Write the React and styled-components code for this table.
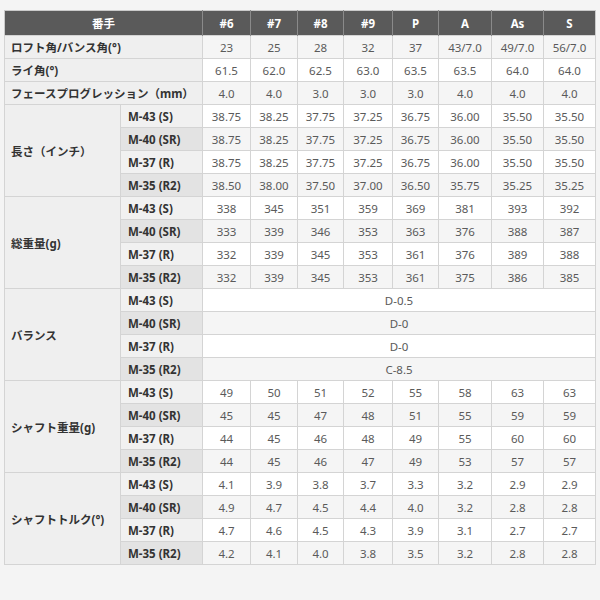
import React from "react";
import styled, { createGlobalStyle } from "styled-components";

const Global = createGlobalStyle`
  html, body { margin: 0; padding: 0; background: #f4f4f4; }
  body { font-family: "Noto Sans", "Noto Sans CJK JP", sans-serif; }
`;

const Page = styled.div`
  padding: 10px 5px 0 4px;
`;

const Table = styled.table`
  border-collapse: collapse;
  table-layout: fixed;
  width: 591px;
  font-size: 11.5px;
  border: 1px solid #cacaca;
`;

const Th = styled.th`
  height: 24px;
  padding: 0;
  background: #5a5a5a;
  color: #fff;
  font-weight: bold;
  text-align: center;
  border-left: 1px solid #8a8a8a;
  &:first-child { border-left: none; }
`;

const Tr = styled.tr`
  height: 23px;
`;

const Label = styled.td`
  padding: 0 0 0 6px;
  background: #efefef;
  color: #333;
  font-weight: bold;
  border: 1px solid #d4d4d4;
  white-space: nowrap;
`;

const Sub = styled.td`
  padding: 0 0 0 7px;
  background: ${(p) => (p.$odd ? "#e3e3e3" : "#f1f1f1")};
  color: #333;
  font-weight: bold;
  border: 1px solid #d4d4d4;
  white-space: nowrap;
`;

const Cell = styled.td`
  padding: 0;
  text-align: center;
  color: #5a5a5a;
  background: ${(p) => (p.$odd ? "#f5f5f5" : "#ffffff")};
  border: 1px solid #d4d4d4;
  white-space: nowrap;
`;

const widths = [116, 82, 48, 47, 46, 49, 46, 53, 52, 52];
const heads = ["#6", "#7", "#8", "#9", "P", "A", "As", "S"];

const top = [
  ["ロフト角/バンス角(°)", ["23", "25", "28", "32", "37", "43/7.0", "49/7.0", "56/7.0"]],
  ["ライ角(°)", ["61.5", "62.0", "62.5", "63.0", "63.5", "63.5", "64.0", "64.0"]],
  ["フェースプログレッション（mm）", ["4.0", "4.0", "3.0", "3.0", "3.0", "4.0", "4.0", "4.0"]],
];

const subs = ["M-43 (S)", "M-40 (SR)", "M-37 (R)", "M-35 (R2)"];

const blocks = [
  ["長さ（インチ）", [
    ["38.75", "38.25", "37.75", "37.25", "36.75", "36.00", "35.50", "35.50"],
    ["38.75", "38.25", "37.75", "37.25", "36.75", "36.00", "35.50", "35.50"],
    ["38.75", "38.25", "37.75", "37.25", "36.75", "36.00", "35.50", "35.50"],
    ["38.50", "38.00", "37.50", "37.00", "36.50", "35.75", "35.25", "35.25"],
  ]],
  ["総重量(g)", [
    ["338", "345", "351", "359", "369", "381", "393", "392"],
    ["333", "339", "346", "353", "363", "376", "388", "387"],
    ["332", "339", "345", "353", "361", "376", "389", "388"],
    ["332", "339", "345", "353", "361", "375", "386", "385"],
  ]],
  ["バランス", [["D-0.5"], ["D-0"], ["D-0"], ["C-8.5"]]],
  ["シャフト重量(g)", [
    ["49", "50", "51", "52", "55", "58", "63", "63"],
    ["45", "45", "47", "48", "51", "55", "59", "59"],
    ["44", "45", "46", "48", "49", "55", "60", "60"],
    ["44", "45", "46", "47", "49", "53", "57", "57"],
  ]],
  ["シャフトトルク(°)", [
    ["4.1", "3.9", "3.8", "3.7", "3.3", "3.2", "2.9", "2.9"],
    ["4.9", "4.7", "4.5", "4.4", "4.0", "3.2", "2.8", "2.8"],
    ["4.7", "4.6", "4.5", "4.3", "3.9", "3.1", "2.7", "2.7"],
    ["4.2", "4.1", "4.0", "3.8", "3.5", "3.2", "2.8", "2.8"],
  ]],
];

export default function App() {
  return (
    <Page>
      <Global />
      <Table>
        <colgroup>
          {widths.map((w, i) => (
            <col key={i} style={{ width: w }} />
          ))}
        </colgroup>
        <thead>
          <tr>
            <Th colSpan={2}>番手</Th>
            {heads.map((h) => (
              <Th key={h}>{h}</Th>
            ))}
          </tr>
        </thead>
        <tbody>
          {top.map(([label, vals], i) => (
            <Tr key={label}>
              <Label colSpan={2}>{label}</Label>
              {vals.map((v, j) => (
                <Cell key={j} $odd={i % 2 === 0}>{v}</Cell>
              ))}
            </Tr>
          ))}
          {blocks.map(([label, rows]) =>
            rows.map((vals, r) => (
              <Tr key={label + r}>
                {r === 0 && <Label rowSpan={4}>{label}</Label>}
                <Sub $odd={r % 2 === 1}>{subs[r]}</Sub>
                {vals.length === 1 ? (
                  <Cell colSpan={8} $odd={r % 2 === 1}>{vals[0]}</Cell>
                ) : (
                  vals.map((v, j) => (
                    <Cell key={j} $odd={r % 2 === 1}>{v}</Cell>
                  ))
                )}
              </Tr>
            ))
          )}
        </tbody>
      </Table>
    </Page>
  );
}
